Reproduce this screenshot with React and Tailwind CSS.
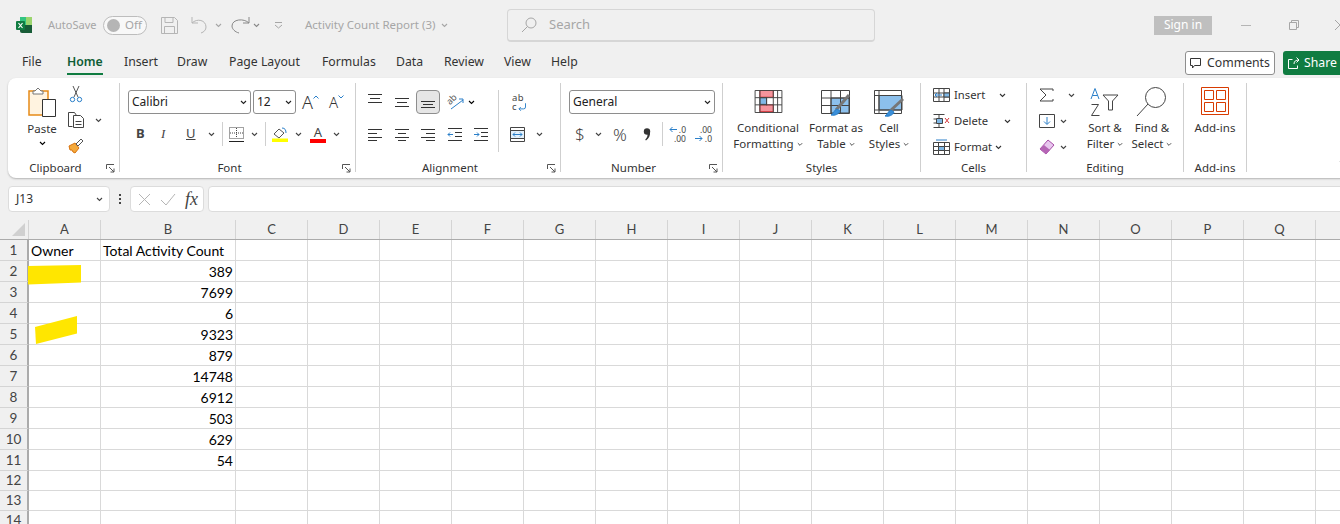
const ui = { fontFamily: '"Noto Sans", "Open Sans", sans-serif' }

const Chev = ({ className = 'text-[#444]', w = 7 }) => (
  <svg width={w} height="5" viewBox="0 0 7 5" fill="none" stroke="currentColor" strokeWidth="1.1" className={`shrink-0 ${className}`}>
    <path d="M1 1l2.5 2.5L6 1" />
  </svg>
)

const Ico = ({ w = 16, h = 16, children, className = '' }) => (
  <svg width={w} height={h} viewBox={`0 0 ${w} ${h}`} fill="none" stroke="#444" strokeWidth="1" className={`shrink-0 ${className}`}>
    {children}
  </svg>
)

function Lines({ rows }) {
  return (
    <Ico w={16} h={14}>
      {rows.map(([y, a, b]) => <path key={y} d={`M${a} ${y}.5H${b}`} stroke="#333" />)}
    </Ico>
  )
}

const Launcher = () => (
  <svg width="9" height="9" viewBox="0 0 9 9" fill="none" stroke="#555" strokeWidth="1" className="absolute right-[4px] bottom-[-1px]">
    <path d="M.5 5V.5H8M3 3l5 5M8 4.5V8H4.5" />
  </svg>
)

function Group({ label, className, launcher, children }) {
  return (
    <div className={`relative shrink-0 flex flex-col h-[89px] border-r border-[#cfcfcf] ${className}`}>
      <div className="flex-1 min-h-0 relative">{children}</div>
      <div className={`h-[14px] -mb-[3px] text-center text-[11.5px] leading-[14px] text-[#333] whitespace-nowrap ${launcher ? 'pr-[16px]' : ''}`}>{label}</div>
      {launcher && <Launcher />}
    </div>
  )
}

function Combo({ text, className }) {
  return (
    <div className={`h-[24px] flex items-center justify-between bg-white border border-[#8e8e8e] rounded-[3px] pl-[3px] pr-[3px] text-[12px] text-[#222] ${className}`}>
      <span>{text}</span>
      <Chev className="text-[#222]" />
    </div>
  )
}

function BigButton({ icon, lines, className, iconClass = 'pt-[5px]' }) {
  return (
    <div className={`flex flex-col items-center shrink-0 ${className}`}>
      <div className={`h-[35px] flex items-start justify-center ${iconClass}`}>{icon}</div>
      <div className="text-[11.5px] leading-[16px] text-[#333] text-center whitespace-nowrap">
        {lines.map((l, i) => (
          <div key={l} className="flex items-center justify-center gap-[3px]">
            {l}
            {i === lines.length - 1 && <Chev w={6} />}
          </div>
        ))}
      </div>
    </div>
  )
}

const CondIcon = () => (
  <svg width="29" height="23" viewBox="0 0 29 24" fill="none" stroke="#444">
    <path d="M5.5 .5h14v7h-14zM5.5 15.5h14v7h-14z" fill="#f4949c" stroke="#d13438" />
    <path d="M5.5 8h7v7h-7z" fill="#7fb8e6" />
    <path d="M.5.5h28v23H.5zM.5 8h28M.5 15.5h28M5.5 0v24M12.5 8v8M19.5 0v24M24 0v24" />
  </svg>
)

const TableIcon = () => (
  <svg width="30" height="27" viewBox="0 0 30 27" fill="none" stroke="#444">
    <path d="M10 8h18v15H10z" fill="#8cc0ec" />
    <path d="M.5.5h28v23H.5zM.5 8h28M.5 15.5h28M10 0v24M19.5 0v24" />
    <path d="M28 5L15 20" stroke="#777" strokeWidth="3" />
    <path d="M16 19c-3 1-3 4-6 6 4 1 8-1 9-4z" fill="#3a8fd9" stroke="#2a7fc9" />
  </svg>
)

const StyleIcon = () => (
  <svg width="30" height="27" viewBox="0 0 30 27" fill="none" stroke="#444">
    <path d="M5 5.5h23V20H5z" fill="#8cc0ec" />
    <path d="M.5.5h27v23H.5zM.5 5.5h27M.5 20h27M5 0v24" />
    <path d="M29 9L16 21" stroke="#777" strokeWidth="3" />
    <path d="M17 20c-3 1-3 4-6 6 4 1 8-1 9-4z" fill="#3a8fd9" stroke="#2a7fc9" />
  </svg>
)

const SortIcon = () => (
  <svg width="30" height="30" viewBox="0 0 30 30" fill="none">
    <path d="M1 12L5 1.5 9 12M2.5 8.5h5" stroke="#2a7fc9" />
    <path d="M1.500 17.500h7L1.500 28.500h8" stroke="#444" />
    <path d="M13 8h15l-5.500 6v9h-4v-9z" stroke="#444" />
  </svg>
)

const FindIcon = () => (
  <svg width="32" height="30" viewBox="0 0 32 30" fill="none" stroke="#444">
    <circle cx="19.500" cy="10.500" r="10" />
    <path d="M12 17L1 29" />
  </svg>
)

const AddinsIcon = () => (
  <svg width="28" height="28" viewBox="0 0 28 28" fill="none" stroke="#d83b01">
    <path d="M.5.5h27v27H.5z" />
    <path d="M3.500 3.500h9v9h-9zM15.500 3.500h9v9h-9zM3.500 15.500h9v9h-9zM15.500 15.500h9v9h-9z" />
  </svg>
)

function TitleBar() {
  return (
    <div className="h-[48px] pt-[2px] flex items-center text-[11.5px] text-[#a6a6a6] [&>*]:shrink-0">
      <svg width="16" height="16" viewBox="0 0 16 16" className="ml-[16px]">
        <path d="M4 0h12v8H4z" fill="#33c481" />
        <path d="M4 8h12v8H6a2 2 0 0 1-2-2z" fill="#185c37" />
        <path d="M10 0h6v8h-6z" fill="#9bd56e" />
        <rect y="4" width="9" height="9" rx="1" fill="#107c41" />
        <path d="M2.500 6l4 5M6.500 6l-4 5" stroke="#fff" strokeWidth="1.200" />
      </svg>
      <span className="ml-[16px] w-[55px] text-[11px]">AutoSave</span>
      <div className="w-[44px] h-[19px] border border-[#bdbdbd] bg-[#f8f8f8] rounded-full flex items-center pl-[3px] gap-[5px]">
        <span className="w-[13px] h-[13px] rounded-full bg-[#b5b5b5]" />
        <span>Off</span>
      </div>
      <Ico w={17} h={17} className="ml-[14px]">
        <path d="M.5.5h13l3 3v13H.5z" stroke="#b5b5b5" />
        <path d="M4 .5v5h8v-5M3.500 16.500v-7h10v7" stroke="#b5b5b5" />
      </Ico>
      <Ico w={20} h={18} className="ml-[13px]">
        <path d="M1 1v6h6M1 7c5-5 14-3 14 4 0 3-2 5-5 6" stroke="#b5b5b5" />
      </Ico>
      <Chev className="ml-[4px] text-[#a6a6a6]" />
      <Ico w={20} h={18} className="ml-[8px]">
        <path d="M19 1v6h-6M19 7c-5-5-17-4-17 3 0 3 3 6 7 7" stroke="#888" />
      </Ico>
      <Chev className="ml-[3px] text-[#888]" />
      <Ico w={9} h={9} className="ml-[14px]">
        <path d="M1 1.500h7M1 4l3.500 3L8 4" stroke="#a6a6a6" />
      </Ico>
      <span className="ml-[22px] w-[133px] whitespace-nowrap">Activity Count Report (3)</span>
      <Chev w={9} className="ml-[2px] text-[#a6a6a6]" />
      <div className="ml-[58px] w-[368px] h-[33px] flex items-center bg-[#f0f0f0] border border-[#d6d6d6] border-b-2 rounded-[4px] pl-[13px] gap-[12px] text-[13px]">
        <svg width="16" height="16" viewBox="0 0 16 16" fill="none" stroke="#a6a6a6">
          <circle cx="10" cy="6" r="5" />
          <path d="M6.500 9.500L1 15" />
        </svg>
        <span>Search</span>
      </div>
      <div className="ml-[279px] w-[58px] h-[19px] bg-[#bfbfbf] text-white text-[12px] flex items-center justify-center">Sign in</div>
      <div className="ml-[29px] w-[10px] h-px bg-[#b5b5b5]" />
      <svg width="10" height="10" viewBox="0 0 10 10" fill="none" stroke="#a6a6a6" className="ml-[38px]">
        <path d="M.5 2.500h7v7h-7zM2.500 2.500v-2h7v7h-2" />
      </svg>
      <svg width="10" height="10" viewBox="0 0 10 10" stroke="#a6a6a6" className="ml-[36px]">
        <path d="M0 0l10 10M10 0L0 10" />
      </svg>
    </div>
  )
}

const tabs = [
  ['File', 'w-[45px]'],
  ['Home', 'w-[57px]'],
  ['Insert', 'w-[53px]'],
  ['Draw', 'w-[52px]'],
  ['Page Layout', 'w-[93px]'],
  ['Formulas', 'w-[74px]'],
  ['Data', 'w-[48px]'],
  ['Review', 'w-[60px]'],
  ['View', 'w-[47px]'],
  ['Help', 'w-[50px]'],
]

function TabRow() {
  return (
    <div className="h-[30px] flex items-start pl-[22px] text-[12.25px] text-[#333]">
      {tabs.map(([name, w]) => (
        <div key={name} className={`${w} h-[27px] flex`}>
          <div className={`h-full pt-[3px] flex items-center whitespace-nowrap border-b-2 ${name === 'Home' ? 'font-semibold text-[#0e5c36] border-[#107c41]' : 'border-transparent'}`}>{name}</div>
        </div>
      ))}
      <div className="ml-auto mt-[3px] w-[90px] h-[24px] flex items-center justify-center gap-[5px] bg-white border border-[#8e8e8e] rounded-[3px]">
        <svg width="12" height="12" viewBox="0 0 12 12" fill="none" stroke="#333">
          <path d="M.5 1.500h10v7H4.500l-2 2.500V8.500h-2z" />
        </svg>
        Comments
      </div>
      <div className="ml-[8px] mt-[3px] mr-[-2px] w-[59px] h-[24px] flex items-center pl-[5px] gap-[4px] bg-[#107c41] text-white rounded-l-[3px]">
        <svg width="12" height="12" viewBox="0 0 12 12" fill="none" stroke="#fff">
          <path d="M4.500 2.500h-4v9h9v-3M6 7c0-3 2-4 5-4M8.500.5l2.500 2.500-2.500 2.500" />
        </svg>
        Share
      </div>
    </div>
  )
}

function ClipboardGroup() {
  return (
    <Group label="Clipboard" launcher className="w-[112px] rounded-l-[8px]">
      <div className="flex pl-[19px]">
        <div className="w-[30px] flex flex-col items-center mt-[4px] shrink-0">
          <svg width="28" height="31" viewBox="0 0 28 31" fill="none">
            <path d="M1 4h19v24H1z" fill="#fff3e0" stroke="#e68a17" strokeWidth="1.500" />
            <path d="M7 4l3-3 3 3h2v3H5V4z" fill="#fff" stroke="#777" />
            <path d="M14.500 12.500h13v17h-13z" fill="#fff" stroke="#333" />
          </svg>
          <span className="mt-[3px] text-[11.5px] leading-[16px] text-[#333]">Paste</span>
          <Chev className="mt-[4px]" />
        </div>
        <div className="ml-[11px] flex flex-col">
          <Ico w={16} h={17} className="mt-[3px]">
            <path d="M5 0l5 11M11 0L6 11" stroke="#555" />
            <circle cx="4.500" cy="13.500" r="2.200" stroke="#2a7fc9" />
            <circle cx="11.500" cy="13.500" r="2.200" stroke="#2a7fc9" />
          </Ico>
          <div className="mt-[9px] flex items-center gap-[11px]">
            <Ico w={16} h={16}>
              <path d="M4.500 14.500h-4V.5h6l2 3" />
              <path d="M5.500 3.500h7l3 3v9h-10zM7.500 9.500h6M7.500 12.500h6" />
            </Ico>
            <Chev />
          </div>
          <svg width="16" height="16" viewBox="0 0 16 16" className="mt-[10px]">
            <path d="M1 8l6-3 4 5-4 5-2-1-1-2-2 0z" fill="#f4a93b" stroke="#d9730f" />
            <path d="M8 6l5-5 2 2-5 5z" fill="#fff" stroke="#555" />
          </svg>
        </div>
      </div>
    </Group>
  )
}

function FontGroup() {
  return (
    <Group label="Font" launcher className="w-[236px]">
      <div className="flex flex-col pl-[8px] pt-[7px]">
        <div className="flex items-center">
          <Combo text="Calibri" className="w-[123px]" />
          <Combo text="12" className="w-[43px] ml-[2px]" />
          <span className="ml-[6px] text-[18px] font-light leading-none text-[#333]">A</span>
          <svg width="6" height="4" viewBox="0 0 6 4" fill="none" stroke="#2a7fc9" className="mb-[10px]"><path d="M.5 3.500L3 1l2.500 2.500" /></svg>
          <span className="ml-[10px] text-[15px] font-light leading-none text-[#333]">A</span>
          <svg width="6" height="4" viewBox="0 0 6 4" fill="none" stroke="#2a7fc9" className="mb-[10px]"><path d="M.5.5L3 3 5.500.5" /></svg>
        </div>
        <div className="flex items-center h-[24px] mt-[8px] text-[#444]">
          <span className="ml-[8px] w-[25px] text-[13px] font-bold">B</span>
          <span className="w-[25px] text-[13px] italic" style={{ fontFamily: '"Liberation Serif", serif' }}>I</span>
          <span className="w-[20px] text-[13px] underline">U</span>
          <Chev className="ml-[2px]" />
          <div className="ml-[7px] w-px h-[24px] bg-[#cfcfcf]" />
          <Ico w={15} h={15} className="ml-[6px]">
            <path d="M.5.5h14v11H.5z" strokeDasharray="1 1" />
            <path d="M7.500 1v10M1 6h13" strokeDasharray="1 1" />
            <path d="M0 14.500h15" stroke="#222" />
          </Ico>
          <Chev className="ml-[7px]" />
          <div className="ml-[7px] w-px h-[24px] bg-[#cfcfcf]" />
          <svg width="16" height="16" viewBox="0 0 16 16" className="ml-[6px]">
            <path d="M2 8l5-5 5 4-5 5z" fill="#fff" stroke="#555" />
            <path d="M10 2c3 0 4 2 4 5" stroke="#2a7fc9" fill="none" />
            <path d="M0 12.500h16V16H0z" fill="#ffff00" />
          </svg>
          <Chev className="ml-[7px]" />
          <div className="ml-[8px] w-[16px] flex flex-col items-center">
            <span className="text-[13px] leading-[13px] text-[#444]">A</span>
            <span className="w-full h-[4px] bg-[#ff0000]" />
          </div>
          <Chev className="ml-[7px]" />
        </div>
      </div>
    </Group>
  )
}

const alignTop = [[1, 0, 14], [5, 2, 12], [9, 0, 14]]

function AlignmentGroup() {
  return (
    <Group label="Alignment" launcher className="w-[205px]">
      <div className="flex pt-[7px] pl-[12px]">
        <div className="flex flex-col w-[130px]">
          <div className="flex items-center h-[24px]">
            <div className="w-[27px] -mt-[5px]"><Lines rows={alignTop} /></div>
            <div className="w-[21px]"><Lines rows={[[3, 0, 14], [7, 2, 12], [11, 0, 14]]} /></div>
            <div className="w-[24px] h-[24px] flex items-center justify-center bg-[#e6e6e6] border border-[#8e8e8e] rounded-[4px]">
              <Lines rows={[[6, 1, 15], [9, 3, 13], [12, 1, 15]]} />
            </div>
            <div className="relative ml-[6px] w-[18px] h-[16px] shrink-0">
              <span className="block w-[12px] text-[9px] leading-[10px] text-[#555] -rotate-45">ab</span>
              <svg width="18" height="16" viewBox="0 0 18 16" fill="none" stroke="#2a7fc9" className="absolute left-0 top-0">
                <path d="M5 15l12-9M13 5h4v4" />
              </svg>
            </div>
            <Chev className="ml-[4px]" />
          </div>
          <div className="flex items-center h-[24px] mt-[8px]">
            <div className="w-[27px]"><Lines rows={[[2, 0, 14], [6, 0, 9], [10, 0, 14], [13, 0, 9]]} /></div>
            <div className="w-[26px]"><Lines rows={[[2, 0, 14], [6, 3, 11], [10, 0, 14], [13, 3, 11]]} /></div>
            <div className="w-[26px]"><Lines rows={[[2, 0, 14], [6, 5, 14], [10, 0, 14], [13, 5, 14]]} /></div>
            <Ico w={16} h={14} className="mr-[10px]">
              <path d="M1 1.500h14M8 5.500h7M8 9.500h7M1 13.500h14" stroke="#333" />
              <path d="M6 7.500H1M3 5.500l-2 2 2 2" stroke="#2a7fc9" />
            </Ico>
            <Ico w={16} h={14}>
              <path d="M1 1.500h14M8 5.500h7M8 9.500h7M1 13.500h14" stroke="#333" />
              <path d="M1 7.500h5M4 5.500l2 2-2 2" stroke="#2a7fc9" />
            </Ico>
          </div>
        </div>
        <div className="w-px h-[62px] bg-[#cfcfcf]" />
        <div className="flex flex-col pl-[11px]">
          <div className="h-[24px] flex flex-col justify-center w-[16px] text-[9.5px] leading-[9px] text-[#444]">
            <div className="h-[9px] pl-[2px] tracking-[.5px]">ab</div>
            <div className="h-[9px] flex items-center pl-[2px]">
              c
              <svg width="9" height="8" viewBox="0 0 9 8" fill="none" stroke="#2a7fc9" className="ml-[1px]"><path d="M8 0v4a2 2 0 0 1-2 2H1M3 4L1 6l2 2" /></svg>
            </div>
          </div>
          <div className="h-[24px] mt-[8px] flex items-center gap-[11px]">
            <svg width="15" height="15" viewBox="0 0 15 15" fill="none" stroke="#444">
              <path d="M.5.5h14v14H.5z" />
              <path d="M.5 3.500h14v8H.5z" fill="#e2f0fb" />
              <path d="M3 7.500h9M5 5.500l-2 2 2 2M10 5.500l2 2-2 2" stroke="#2a7fc9" />
            </svg>
            <Chev />
          </div>
        </div>
      </div>
    </Group>
  )
}

function NumberGroup() {
  return (
    <Group label="Number" launcher className="w-[162px]">
      <div className="flex flex-col pl-[8px] pt-[7px]">
        <Combo text="General" className="w-[146px]" />
        <div className="flex items-center h-[24px] mt-[8px] text-[#444]">
          <span className="ml-[6px] w-[12px] text-[17px] font-light">$</span>
          <Chev className="ml-[8px]" />
          <span className="ml-[11px] w-[17px] text-[17px] font-light leading-none">%</span>
          <svg width="8" height="13" viewBox="0 0 8 13" className="ml-[13px] shrink-0">
            <circle cx="4" cy="3.500" r="3.200" fill="#333" />
            <path d="M7 4c.4 3.500-1 6.500-4 8.500l-.8-.8C4 10 4.700 8 4.500 6z" fill="#333" />
          </svg>
          <div className="ml-[11px] w-px h-[24px] bg-[#cfcfcf]" />
          <div className="ml-[6px] w-[17px] text-[8.5px] leading-[9px]">
            <div className="flex items-center justify-between">
              <svg width="8" height="7" viewBox="0 0 8 7" fill="none" stroke="#2a7fc9"><path d="M8 3.500H1M3.500 1L1 3.500 3.500 6" /></svg>
              .0
            </div>
            <div className="text-right">.00</div>
          </div>
          <div className="ml-[9px] w-[17px] text-[8.5px] leading-[9px]">
            <div className="text-right">.00</div>
            <div className="flex items-center justify-between">
              <svg width="8" height="7" viewBox="0 0 8 7" fill="none" stroke="#2a7fc9"><path d="M0 3.500h7M4.500 1L7 3.500 4.500 6" /></svg>
              .0
            </div>
          </div>
        </div>
      </div>
    </Group>
  )
}

function CellRow({ icon, text, chevGap }) {
  return (
    <div className="h-[26px] flex items-center pl-[12px] text-[11.25px] text-[#333]">
      {icon}
      <span className="ml-[4px]">{text}</span>
      <Chev className={chevGap} />
    </div>
  )
}

function Ribbon() {
  return (
    <div className="ml-[8px] mr-[-20px] h-[100px] bg-white rounded-[8px] shadow-[0_1px_2px_rgba(0,0,0,0.25)] flex pt-[5px]">
      <ClipboardGroup />
      <FontGroup />
      <AlignmentGroup />
      <NumberGroup />
      <Group label="Styles" className="w-[198px]">
        <div className="flex pt-[2px] -ml-px">
          <BigButton icon={<CondIcon />} lines={['Conditional', 'Formatting']} className="w-[92px]" />
          <BigButton icon={<TableIcon />} lines={['Format as', 'Table']} className="w-[44px]" />
          <BigButton icon={<StyleIcon />} lines={['Cell', 'Styles']} className="w-[62px]" />
        </div>
      </Group>
      <Group label="Cells" className="w-[106px]">
        <div className="-mt-px">
          <CellRow text="Insert" chevGap="ml-[14px]" icon={
            <svg width="17" height="14" viewBox="0 0 17 14" fill="none" stroke="#444"><path d="M.5.5h16v13H.5zM.5 5h16M.5 9h16M6 0v14M11 0v14" /><path d="M11 5h5.500v4H11z" fill="#7fb8e6" /><path d="M9 7H2M4 5L2 7l2 2" stroke="#2a7fc9" /></svg>
          } />
          <CellRow text="Delete" chevGap="ml-[16px]" icon={
            <svg width="17" height="14" viewBox="0 0 17 14" fill="none" stroke="#444"><path d="M.5.5h11M.5 13.500h11M.5 5h3M.5 9h3M6 0v5M6 9v5" /><path d="M3.500 4.500h6v5h-6z" fill="#7fb8e6" /><path d="M12 4l4 5M16 4l-4 5" stroke="#d13438" /></svg>
          } />
          <CellRow text="Format" chevGap="ml-[3px]" icon={
            <svg width="17" height="16" viewBox="0 0 17 16" fill="none" stroke="#444"><path d="M.5 3.500h16v12H.5zM.5 7.500h16M.5 11.500h16M5.500 3v13M11.500 3v13" /><path d="M5.500 7.500h6v4h-6z" fill="#7fb8e6" /><path d="M3 1h11" stroke="#2a7fc9" /></svg>
          } />
        </div>
      </Group>
      <Group label="Editing" className="w-[157px]">
        <div className="flex pl-[12px]">
          <div className="w-[48px] flex flex-col text-[#444] -mt-px">
            <div className="h-[26px] flex items-center">
              <Ico w={15} h={14}><path d="M14 3V1H1l6 6-6 6h13v-2" /></Ico>
              <Chev className="ml-[14px]" />
            </div>
            <div className="h-[26px] flex items-center">
              <svg width="16" height="14" viewBox="0 0 16 14" fill="none" stroke="#444"><path d="M.5.5h15v13H.5z" /><path d="M8 3v7M5 7.500l3 3 3-3" stroke="#2a7fc9" /></svg>
              <Chev className="ml-[5px]" />
            </div>
            <div className="h-[26px] flex items-center">
              <svg width="16" height="16" viewBox="0 0 16 16"><path d="M1 10l8-9 6 5-8 9z" fill="#e8c6ee" stroke="#a64ca6" /><path d="M1 10l4-4 6 5-4 4z" fill="#b565b5" /></svg>
              <Chev className="ml-[5px]" />
            </div>
          </div>
          <BigButton icon={<SortIcon />} lines={['Sort &', 'Filter']} iconClass="pt-[2px]" className="w-[46px] ml-[-5px] mt-[2px]" />
          <BigButton icon={<FindIcon />} lines={['Find &', 'Select']} iconClass="pt-[2px]" className="w-[46px] ml-[1px] mt-[2px]" />
        </div>
      </Group>
      <Group label="Add-ins" className="w-[63px]">
        <div className="flex flex-col items-center pt-[4px] text-[11.5px] text-[#333]">
          <AddinsIcon />
          <span className="mt-[5px] leading-[16px]">Add-ins</span>
        </div>
      </Group>
      <div className="flex-1 pl-[92px] pt-[77px]">
        <Chev />
      </div>
    </div>
  )
}

function FormulaBar() {
  return (
    <div className="h-[42px] flex items-start pt-[8px] pl-[8px]">
      <div className="w-[102px] h-[26px] flex items-center justify-between pl-[7px] pr-[4px] bg-white border border-[#dcdcdc] rounded-[4px] text-[12px] text-[#333]">
        J13
        <Chev w={11} />
      </div>
      <div className="w-[20px] h-[26px] flex flex-col items-center justify-center gap-[2px]">
        <span className="w-[2px] h-[2px] bg-[#444]" />
        <span className="w-[2px] h-[2px] bg-[#444]" />
        <span className="w-[2px] h-[2px] bg-[#444]" />
      </div>
      <div className="w-[74px] h-[26px] flex items-center pl-[7px] bg-white border border-[#dcdcdc] rounded-[4px]">
        <svg width="13" height="13" viewBox="0 0 13 13" stroke="#b5b5b5"><path d="M1 1l11 11M12 1L1 12" /></svg>
        <svg width="16" height="13" viewBox="0 0 16 13" fill="none" stroke="#b5b5b5" className="ml-[9px]"><path d="M1 7l5 5L15 1" /></svg>
        <span className="ml-[9px] text-[18px] italic text-[#444] leading-none" style={{ fontFamily: '"Liberation Serif", serif' }}>fx</span>
      </div>
      <div className="ml-[4px] flex-1 mr-[-10px] h-[26px] bg-white border border-[#dcdcdc] rounded-[4px]" />
    </div>
  )
}

// last column runs off the window, its letter is not visible
const columns = [
  ['A', 'w-[72px]'], ['B', 'w-[135px]'], ['C', 'w-[72px]'], ['D', 'w-[72px]'], ['E', 'w-[72px]'], ['F', 'w-[72px]'],
  ['G', 'w-[72px]'], ['H', 'w-[72px]'], ['I', 'w-[72px]'], ['J', 'w-[72px]'], ['K', 'w-[72px]'], ['L', 'w-[72px]'],
  ['M', 'w-[72px]'], ['N', 'w-[72px]'], ['O', 'w-[72px]'], ['P', 'w-[72px]'], ['Q', 'w-[72px]'], ['', 'w-[72px]'],
]

const values = ['Total Activity Count', '389', '7699', '6', '9323', '879', '14748', '6912', '503', '629', '54', '', '', '']

function Sheet() {
  return (
    <div className="relative flex-1 min-h-0 overflow-hidden bg-white" style={{ fontFamily: 'Lato, sans-serif' }}>
      <div className="flex h-[20px] bg-[#f0f0f0] border-b border-[#ababab]">
        <div className="w-[29px] shrink-0 flex items-end justify-end pr-[3px] pb-[3px] border-r border-[#d4d4d4]">
          <span className="w-0 h-0 border-l-[13px] border-l-transparent border-b-[13px] border-b-[#d0d0d0]" />
        </div>
        {columns.map(([c, w]) => (
          <div key={c} className={`${w} shrink-0 flex items-center justify-center text-[13px] text-[#444] border-r border-[#d4d4d4]`}>{c}</div>
        ))}
      </div>
      {values.map((v, i) => (
        <div key={i} className={`flex ${i < 11 ? 'h-[21px]' : 'h-[20px]'}`}>
          <div className="w-[29px] shrink-0 flex items-center justify-center text-[13.5px] text-[#444] bg-[#f0f0f0] border-r-2 border-r-[#ababab] border-b border-b-[#d4d4d4]">{i + 1}</div>
          {columns.map(([c, w]) => (
            <div key={c} className={`${w} shrink-0 flex items-center px-[2px] text-[14px] text-black whitespace-nowrap border-r border-b border-[#d9d9d9] ${i > 0 ? 'justify-end' : ''}`}>
              {c === 'A' && i === 0 && 'Owner'}
              {c === 'B' && v}
            </div>
          ))}
        </div>
      ))}
      {/* redaction marks drawn over column A */}
      <svg width="60" height="84" viewBox="0 0 60 84" className="absolute left-[26px] top-[42px]">
        <path d="M2 4L55 3V20.500L2 22.500z" fill="#ffe600" />
        <path d="M9 65L51 54V71.500L10 82z" fill="#ffe600" />
      </svg>
    </div>
  )
}

export default function App() {
  return (
    <div className="w-[1340px] h-[524px] overflow-hidden flex flex-col bg-[#f0f0f0]" style={ui}>
      <TitleBar />
      <TabRow />
      <Ribbon />
      <FormulaBar />
      <Sheet />
    </div>
  )
}
